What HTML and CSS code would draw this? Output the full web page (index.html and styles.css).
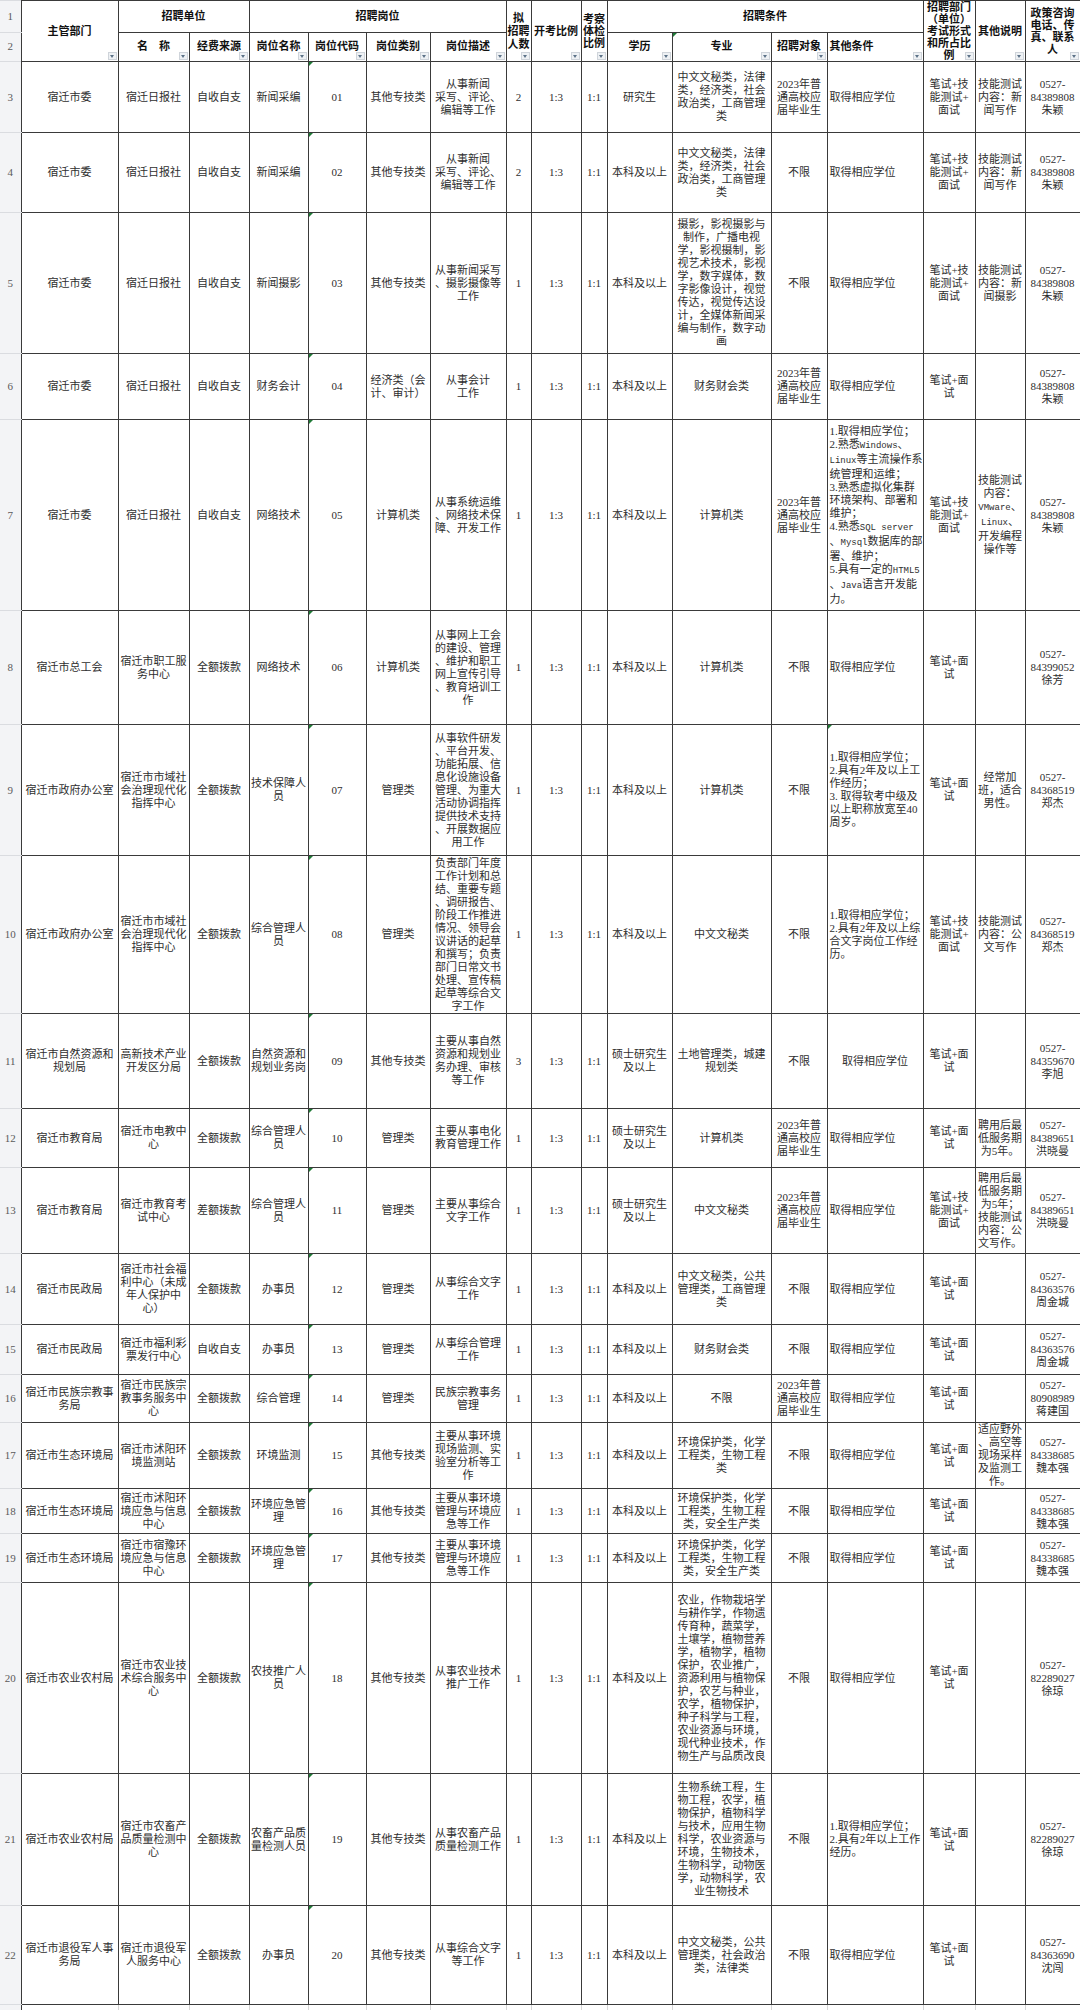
FILE: index.html
```html
<!DOCTYPE html>
<html lang="zh-CN">
<head>
<meta charset="utf-8">
<title>招聘岗位表</title>
<link rel="stylesheet" href="styles.css">
</head>
<body>
<table class="sheet">
<colgroup>
<col class="w1"><col class="w2"><col class="w3"><col class="w4"><col class="w5"><col class="w6"><col class="w7"><col class="w8"><col class="w9"><col class="w10"><col class="w11"><col class="w12"><col class="w13"><col class="w14"><col class="w15"><col class="w16"><col class="w17"><col class="w18">
</colgroup>
<tbody>
<tr class="r1">
<td class="n">1</td>
<td class="h" rowspan="2">主管部门<span class="f"></span></td>
<td class="h" colspan="2">招聘单位</td>
<td class="h" colspan="4">招聘岗位</td>
<td class="h" rowspan="2">拟<br>招聘<br>人数<span class="f"></span></td>
<td class="h" rowspan="2">开考比例<span class="f"></span></td>
<td class="h tight" rowspan="2">考察<br>体检<br>比例<span class="f"></span></td>
<td class="h" colspan="4">招聘条件</td>
<td class="h tight" rowspan="2">招聘部门<br>（单位）<br>考试形式<br>和所占比<br>例<span class="f"></span></td>
<td class="h" rowspan="2">其他说明<span class="f"></span></td>
<td class="h tight" rowspan="2">政策咨询<br>电话、传<br>真、联系<br>人<span class="f"></span></td>
</tr>
<tr class="r2">
<td class="n">2</td>
<td class="h">名　称<span class="f"></span></td>
<td class="h">经费来源<span class="f"></span></td>
<td class="h">岗位名称<span class="f"></span></td>
<td class="h">岗位代码<span class="f"></span></td>
<td class="h">岗位类别<span class="f"></span></td>
<td class="h">岗位描述<span class="f"></span></td>
<td class="h">学历<span class="f"></span></td>
<td class="h t">专业<span class="f"></span></td>
<td class="h">招聘对象<span class="f"></span></td>
<td class="h l">其他条件<span class="f"></span></td>
</tr>
<tr class="r3">
<td class="n">3</td>
<td>宿迁市委</td><td>宿迁日报社</td><td>自收自支</td><td>新闻采编</td><td class="t">01</td><td>其他专技类</td>
<td>从事新闻<br>采写、评论、<br>编辑等工作</td><td>2</td><td>1:3</td><td>1:1</td><td>研究生</td>
<td>中文文秘类，法律<br>类，经济类，社会<br>政治类，工商管理<br>类</td>
<td>2023年普<br>通高校应<br>届毕业生</td><td class="l">取得相应学位</td>
<td>笔试+技<br>能测试+<br>面试</td><td>技能测试<br>内容：新<br>闻写作</td><td>0527-<br>84389808<br>朱颖</td>
</tr>
<tr class="r4">
<td class="n">4</td>
<td>宿迁市委</td><td>宿迁日报社</td><td>自收自支</td><td>新闻采编</td><td class="t">02</td><td>其他专技类</td>
<td>从事新闻<br>采写、评论、<br>编辑等工作</td><td>2</td><td>1:3</td><td>1:1</td><td>本科及以上</td>
<td>中文文秘类，法律<br>类，经济类，社会<br>政治类，工商管理<br>类</td>
<td>不限</td><td class="l">取得相应学位</td>
<td>笔试+技<br>能测试+<br>面试</td><td>技能测试<br>内容：新<br>闻写作</td><td>0527-<br>84389808<br>朱颖</td>
</tr>
<tr class="r5">
<td class="n">5</td>
<td>宿迁市委</td><td>宿迁日报社</td><td>自收自支</td><td>新闻摄影</td><td class="t">03</td><td>其他专技类</td>
<td>从事新闻采写<br>、摄影摄像等<br>工作</td><td>1</td><td>1:3</td><td>1:1</td><td>本科及以上</td>
<td>摄影，影视摄影与<br>制作，广播电视<br>学，影视摄制，影<br>视艺术技术，影视<br>学，数字媒体，数<br>字影像设计，视觉<br>传达，视觉传达设<br>计，全媒体新闻采<br>编与制作，数字动<br>画</td>
<td>不限</td><td class="l">取得相应学位</td>
<td>笔试+技<br>能测试+<br>面试</td><td>技能测试<br>内容：新<br>闻摄影</td><td>0527-<br>84389808<br>朱颖</td>
</tr>
<tr class="r6">
<td class="n">6</td>
<td>宿迁市委</td><td>宿迁日报社</td><td>自收自支</td><td>财务会计</td><td class="t">04</td><td>经济类（会<br>计、审计）</td>
<td>从事会计<br>工作</td><td>1</td><td>1:3</td><td>1:1</td><td>本科及以上</td>
<td>财务财会类</td>
<td>2023年普<br>通高校应<br>届毕业生</td><td class="l">取得相应学位</td>
<td>笔试+面<br>试</td><td></td><td>0527-<br>84389808<br>朱颖</td>
</tr>
<tr class="r7">
<td class="n">7</td>
<td>宿迁市委</td><td>宿迁日报社</td><td>自收自支</td><td>网络技术</td><td class="t">05</td><td>计算机类</td>
<td>从事系统运维<br>、网络技术保<br>障、开发工作</td><td>1</td><td>1:3</td><td>1:1</td><td>本科及以上</td>
<td>计算机类</td>
<td>2023年普<br>通高校应<br>届毕业生</td>
<td class="l">1.取得相应学位；<br>2.熟悉<span class="lat">Windows</span>、<br><span class="lat">Linux</span>等主流操作系<br>统管理和运维；<br>3.熟悉虚拟化集群<br>环境架构、部署和<br>维护；<br>4.熟悉<span class="lat">SQL server</span><br>、<span class="lat">Mysql</span>数据库的部<br>署、维护；<br>5.具有一定的<span class="lat">HTML5</span><br>、<span class="lat">Java</span>语言开发能<br>力。</td>
<td>笔试+技<br>能测试+<br>面试</td><td>技能测试<br>内容：<br><span class="lat">VMware</span>、<br><span class="lat">Linux</span>、<br>开发编程<br>操作等</td><td>0527-<br>84389808<br>朱颖</td>
</tr>
<tr class="r8">
<td class="n">8</td>
<td>宿迁市总工会</td><td>宿迁市职工服<br>务中心</td><td>全额拨款</td><td>网络技术</td><td class="t">06</td><td>计算机类</td>
<td>从事网上工会<br>的建设、管理<br>、维护和职工<br>网上宣传引导<br>、教育培训工<br>作</td><td>1</td><td>1:3</td><td>1:1</td><td>本科及以上</td>
<td>计算机类</td>
<td>不限</td><td class="l">取得相应学位</td>
<td>笔试+面<br>试</td><td></td><td>0527-<br>84399052<br>徐芳</td>
</tr>
<tr class="r9">
<td class="n">9</td>
<td>宿迁市政府办公室</td><td>宿迁市市域社<br>会治理现代化<br>指挥中心</td><td>全额拨款</td><td>技术保障人<br>员</td><td class="t">07</td><td>管理类</td>
<td>从事软件研发<br>、平台开发、<br>功能拓展、信<br>息化设施设备<br>管理、为重大<br>活动协调指挥<br>提供技术支持<br>、开展数据应<br>用工作</td><td>1</td><td>1:3</td><td>1:1</td><td>本科及以上</td>
<td>计算机类</td>
<td>不限</td>
<td class="l t">1.取得相应学位；<br>2.具有2年及以上工<br>作经历；<br>3. 取得软考中级及<br>以上职称放宽至40<br>周岁。</td>
<td>笔试+面<br>试</td><td>经常加<br>班，适合<br>男性。</td><td>0527-<br>84368519<br>郑杰</td>
</tr>
<tr class="r10">
<td class="n">10</td>
<td>宿迁市政府办公室</td><td>宿迁市市域社<br>会治理现代化<br>指挥中心</td><td>全额拨款</td><td>综合管理人<br>员</td><td class="t">08</td><td>管理类</td>
<td>负责部门年度<br>工作计划和总<br>结、重要专题<br>、调研报告、<br>阶段工作推进<br>情况、领导会<br>议讲话的起草<br>和撰写；负责<br>部门日常文书<br>处理、宣传稿<br>起草等综合文<br>字工作</td><td>1</td><td>1:3</td><td>1:1</td><td>本科及以上</td>
<td>中文文秘类</td>
<td>不限</td>
<td class="l">1.取得相应学位；<br>2.具有2年及以上综<br>合文字岗位工作经<br>历。</td>
<td>笔试+技<br>能测试+<br>面试</td><td>技能测试<br>内容：公<br>文写作</td><td>0527-<br>84368519<br>郑杰</td>
</tr>
<tr class="r11">
<td class="n">11</td>
<td>宿迁市自然资源和<br>规划局</td><td>高新技术产业<br>开发区分局</td><td>全额拨款</td><td>自然资源和<br>规划业务岗</td><td class="t">09</td><td>其他专技类</td>
<td>主要从事自然<br>资源和规划业<br>务办理、审核<br>等工作</td><td>3</td><td>1:3</td><td>1:1</td><td>硕士研究生<br>及以上</td>
<td>土地管理类，城建<br>规划类</td>
<td>不限</td><td>取得相应学位</td>
<td>笔试+面<br>试</td><td></td><td>0527-<br>84359670<br>李旭</td>
</tr>
<tr class="r12">
<td class="n">12</td>
<td>宿迁市教育局</td><td>宿迁市电教中<br>心</td><td>全额拨款</td><td>综合管理人<br>员</td><td class="t">10</td><td>管理类</td>
<td>主要从事电化<br>教育管理工作</td><td>1</td><td>1:3</td><td>1:1</td><td>硕士研究生<br>及以上</td>
<td>计算机类</td>
<td>2023年普<br>通高校应<br>届毕业生</td><td class="l">取得相应学位</td>
<td>笔试+面<br>试</td><td>聘用后最<br>低服务期<br>为5年。</td><td>0527-<br>84389651<br>洪晓曼</td>
</tr>
<tr class="r13">
<td class="n">13</td>
<td>宿迁市教育局</td><td>宿迁市教育考<br>试中心</td><td>差额拨款</td><td>综合管理人<br>员</td><td class="t">11</td><td>管理类</td>
<td>主要从事综合<br>文字工作</td><td>1</td><td>1:3</td><td>1:1</td><td>硕士研究生<br>及以上</td>
<td>中文文秘类</td>
<td>2023年普<br>通高校应<br>届毕业生</td><td class="l">取得相应学位</td>
<td>笔试+技<br>能测试+<br>面试</td><td>聘用后最<br>低服务期<br>为5年；<br>技能测试<br>内容：公<br>文写作。</td><td>0527-<br>84389651<br>洪晓曼</td>
</tr>
<tr class="r14">
<td class="n">14</td>
<td>宿迁市民政局</td><td>宿迁市社会福<br>利中心（未成<br>年人保护中<br>心）</td><td>全额拨款</td><td>办事员</td><td class="t">12</td><td>管理类</td>
<td>从事综合文字<br>工作</td><td>1</td><td>1:3</td><td>1:1</td><td>本科及以上</td>
<td>中文文秘类，公共<br>管理类，工商管理<br>类</td>
<td>不限</td><td class="l">取得相应学位</td>
<td>笔试+面<br>试</td><td></td><td>0527-<br>84363576<br>周金城</td>
</tr>
<tr class="r15">
<td class="n">15</td>
<td>宿迁市民政局</td><td>宿迁市福利彩<br>票发行中心</td><td>自收自支</td><td>办事员</td><td class="t">13</td><td>管理类</td>
<td>从事综合管理<br>工作</td><td>1</td><td>1:3</td><td>1:1</td><td>本科及以上</td>
<td>财务财会类</td>
<td>不限</td><td class="l">取得相应学位</td>
<td>笔试+面<br>试</td><td></td><td>0527-<br>84363576<br>周金城</td>
</tr>
<tr class="r16">
<td class="n">16</td>
<td>宿迁市民族宗教事<br>务局</td><td>宿迁市民族宗<br>教事务服务中<br>心</td><td>全额拨款</td><td>综合管理</td><td class="t">14</td><td>管理类</td>
<td>民族宗教事务<br>管理</td><td>1</td><td>1:3</td><td>1:1</td><td>本科及以上</td>
<td>不限</td>
<td>2023年普<br>通高校应<br>届毕业生</td><td class="l">取得相应学位</td>
<td>笔试+面<br>试</td><td></td><td>0527-<br>80908989<br>蒋建国</td>
</tr>
<tr class="r17">
<td class="n">17</td>
<td>宿迁市生态环境局</td><td>宿迁市沭阳环<br>境监测站</td><td>全额拨款</td><td>环境监测</td><td class="t">15</td><td>其他专技类</td>
<td>主要从事环境<br>现场监测、实<br>验室分析等工<br>作</td><td>1</td><td>1:3</td><td>1:1</td><td>本科及以上</td>
<td>环境保护类，化学<br>工程类，生物工程<br>类</td>
<td>不限</td><td class="l">取得相应学位</td>
<td>笔试+面<br>试</td><td>适应野外<br>、高空等<br>现场采样<br>及监测工<br>作。</td><td>0527-<br>84338685<br>魏本强</td>
</tr>
<tr class="r18">
<td class="n">18</td>
<td>宿迁市生态环境局</td><td>宿迁市沭阳环<br>境应急与信息<br>中心</td><td>全额拨款</td><td>环境应急管<br>理</td><td class="t">16</td><td>其他专技类</td>
<td>主要从事环境<br>管理与环境应<br>急等工作</td><td>1</td><td>1:3</td><td>1:1</td><td>本科及以上</td>
<td>环境保护类，化学<br>工程类，生物工程<br>类，安全生产类</td>
<td>不限</td><td class="l">取得相应学位</td>
<td>笔试+面<br>试</td><td></td><td>0527-<br>84338685<br>魏本强</td>
</tr>
<tr class="r19">
<td class="n">19</td>
<td>宿迁市生态环境局</td><td>宿迁市宿豫环<br>境应急与信息<br>中心</td><td>全额拨款</td><td>环境应急管<br>理</td><td class="t">17</td><td>其他专技类</td>
<td>主要从事环境<br>管理与环境应<br>急等工作</td><td>1</td><td>1:3</td><td>1:1</td><td>本科及以上</td>
<td>环境保护类，化学<br>工程类，生物工程<br>类，安全生产类</td>
<td>不限</td><td class="l">取得相应学位</td>
<td>笔试+面<br>试</td><td></td><td>0527-<br>84338685<br>魏本强</td>
</tr>
<tr class="r20">
<td class="n">20</td>
<td>宿迁市农业农村局</td><td>宿迁市农业技<br>术综合服务中<br>心</td><td>全额拨款</td><td>农技推广人<br>员</td><td class="t">18</td><td>其他专技类</td>
<td>从事农业技术<br>推广工作</td><td>1</td><td>1:3</td><td>1:1</td><td>本科及以上</td>
<td>农业，作物栽培学<br>与耕作学，作物遗<br>传育种，蔬菜学，<br>土壤学，植物营养<br>学，植物学，植物<br>保护，农业推广，<br>资源利用与植物保<br>护，农艺与种业，<br>农学，植物保护，<br>种子科学与工程，<br>农业资源与环境，<br>现代种业技术，作<br>物生产与品质改良</td>
<td>不限</td><td class="l">取得相应学位</td>
<td>笔试+面<br>试</td><td></td><td>0527-<br>82289027<br>徐琼</td>
</tr>
<tr class="r21">
<td class="n">21</td>
<td>宿迁市农业农村局</td><td>宿迁市农畜产<br>品质量检测中<br>心</td><td>全额拨款</td><td>农畜产品质<br>量检测人员</td><td class="t">19</td><td>其他专技类</td>
<td>从事农畜产品<br>质量检测工作</td><td>1</td><td>1:3</td><td>1:1</td><td>本科及以上</td>
<td>生物系统工程，生<br>物工程，农学，植<br>物保护，植物科学<br>与技术，应用生物<br>科学，农业资源与<br>环境，生物技术，<br>生物科学，动物医<br>学，动物科学，农<br>业生物技术</td>
<td>不限</td><td class="l">1.取得相应学位；<br>2.具有2年以上工作<br>经历。</td>
<td>笔试+面<br>试</td><td></td><td>0527-<br>82289027<br>徐琼</td>
</tr>
<tr class="r22">
<td class="n">22</td>
<td>宿迁市退役军人事<br>务局</td><td>宿迁市退役军<br>人服务中心</td><td>全额拨款</td><td>办事员</td><td class="t">20</td><td>其他专技类</td>
<td>从事综合文字<br>等工作</td><td>1</td><td>1:3</td><td>1:1</td><td>本科及以上</td>
<td>中文文秘类，公共<br>管理类，社会政治<br>类，法律类</td>
<td>不限</td><td class="l">取得相应学位</td>
<td>笔试+面<br>试</td><td></td><td>0527-<br>84363690<br>沈闯</td>
</tr>
<tr class="r23">
<td class="n">23</td>
<td class="e"></td><td class="e"></td><td class="e"></td><td class="e"></td><td class="e"></td><td class="e"></td><td class="e"></td><td class="e"></td><td class="e"></td><td class="e"></td><td class="e"></td><td class="e"></td><td class="e"></td><td class="e"></td><td class="e"></td><td class="e"></td><td class="e"></td>
</tr>
</tbody>
</table>
</body>
</html>
```

FILE: styles.css
```css
html, body {
  margin: 0;
  padding: 0;
  overflow: hidden;
  background: #ffffff;
}

.sheet {
  width: 1080px;
  table-layout: fixed;
  border-collapse: collapse;
  font-family: "Liberation Serif", "Noto Sans CJK SC", serif;
  font-size: 11px;
  line-height: 13px;
  color: #2e2e2e;
}

.w1 { width: 21px; }
.w2 { width: 97px; }
.w3 { width: 71px; }
.w4 { width: 60px; }
.w5 { width: 59px; }
.w6 { width: 58px; }
.w7 { width: 64px; }
.w8 { width: 76px; }
.w9 { width: 25px; }
.w10 { width: 50px; }
.w11 { width: 26px; }
.w12 { width: 65px; }
.w13 { width: 99px; }
.w14 { width: 56px; }
.w15 { width: 96px; }
.w16 { width: 52px; }
.w17 { width: 50px; }
.w18 { width: 55px; }

.sheet td {
  border: 1px solid #3a3a3a;
  padding: 0 1px;
  text-align: center;
  vertical-align: middle;
  white-space: nowrap;
  overflow: hidden;
  position: relative;
}

.sheet td.n {
  background: #f3f4f6;
  color: #5a5a5a;
  border-left: none;
  border-top: 1px solid #dadce0;
  border-bottom: 1px solid #dadce0;
  border-right: 1px solid #3a3a3a;
  padding: 0;
}

.sheet td.h {
  font-weight: bold;
  color: #111111;
}

.sheet td.tight {
  line-height: 12px;
}

.sheet td.l {
  text-align: left;
  padding-left: 2px;
  padding-right: 0;
}

.sheet td.e {
  border-left-color: #d6d6d6;
  border-right-color: #d6d6d6;
  border-bottom-color: #d6d6d6;
}

.lat {
  font-family: "Liberation Mono", monospace;
  font-size: 9px;
}

.f {
  position: absolute;
  right: 1px;
  bottom: 1px;
  width: 7px;
  height: 6px;
  background: #eef1f4;
  border: 1px solid #cfd4da;
}

.f::after {
  content: "";
  position: absolute;
  left: 1px;
  top: 2px;
  border-top: 3px solid #5d7388;
  border-left: 2.5px solid transparent;
  border-right: 2.5px solid transparent;
}

.t::before {
  content: "";
  position: absolute;
  left: 0;
  top: 0;
  border-top: 4px solid #1f7a36;
  border-right: 4px solid transparent;
}

.r1 { height: 31px; }
.r2 { height: 29px; }
.r3 { height: 71px; }
.r4 { height: 80px; }
.r5 { height: 141px; }
.r6 { height: 66px; }
.r7 { height: 191px; }
.r8 { height: 114px; }
.r9 { height: 131px; }
.r10 { height: 158px; }
.r11 { height: 95px; }
.r12 { height: 59px; }
.r13 { height: 86px; }
.r14 { height: 71px; }
.r15 { height: 50px; }
.r16 { height: 48px; }
.r17 { height: 65px; }
.r18 { height: 45px; }
.r19 { height: 49px; }
.r20 { height: 191px; }
.r21 { height: 132px; }
.r22 { height: 99px; }
.r23 { height: 20px; }
```
